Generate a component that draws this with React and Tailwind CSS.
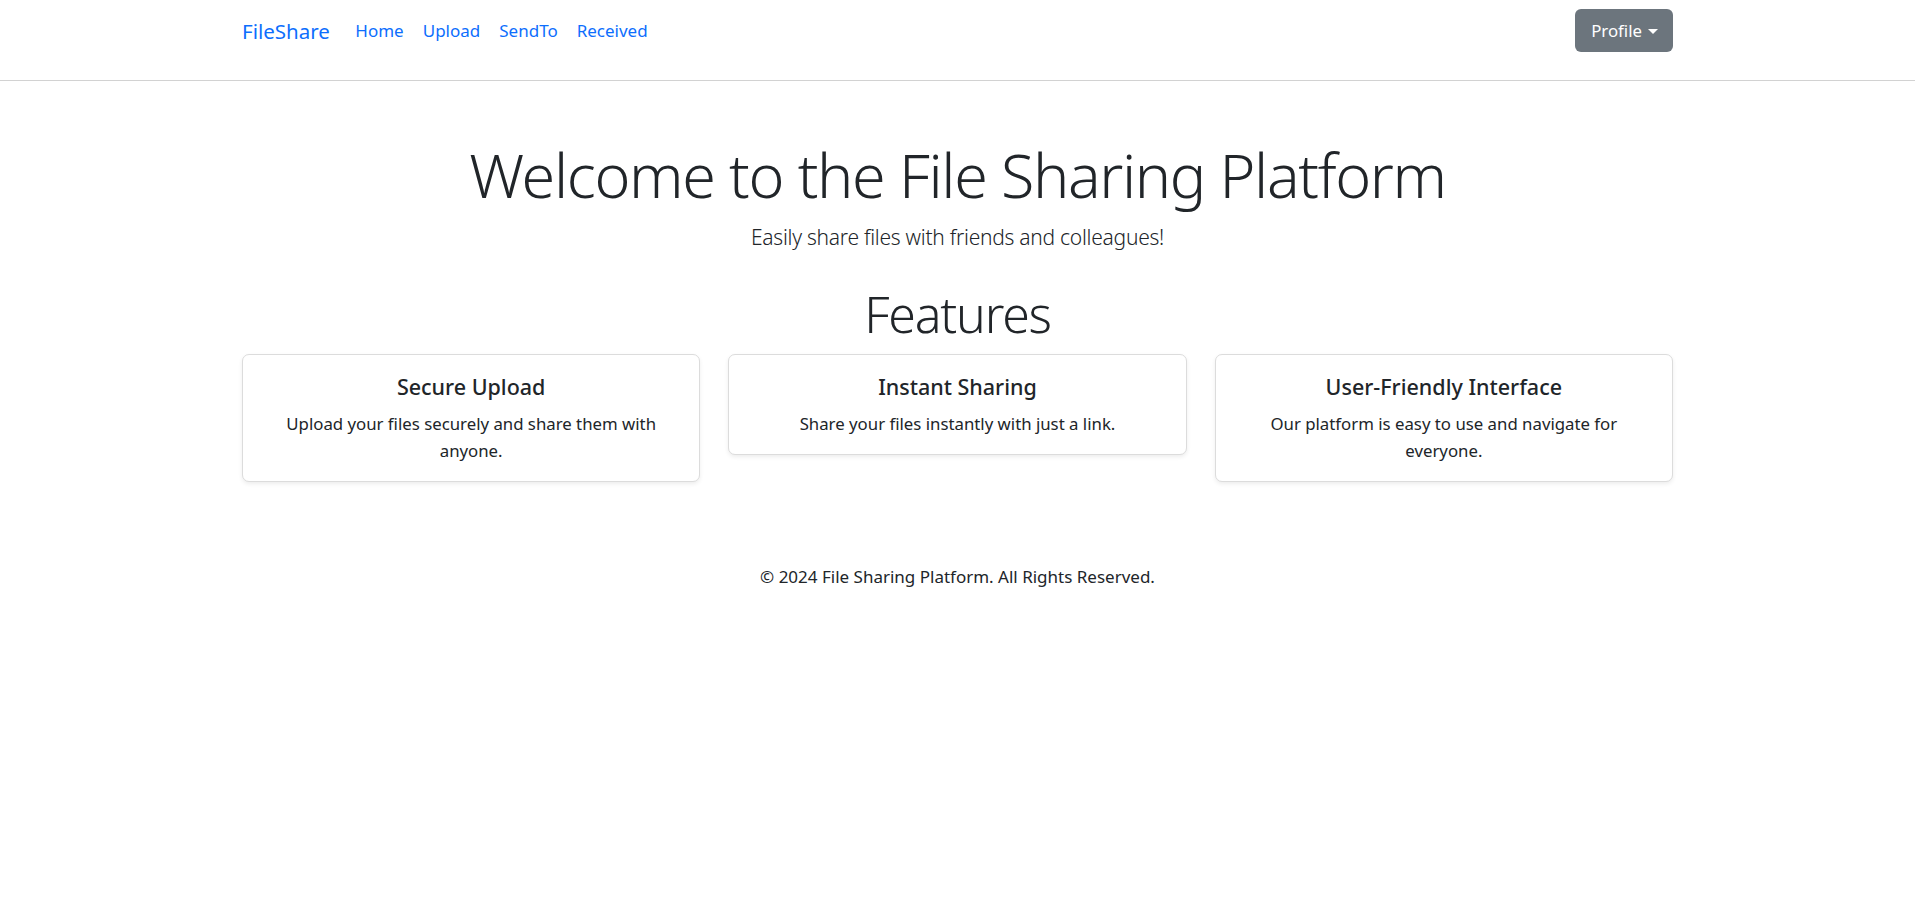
import React from "react";

const features = [
  {
    title: "Secure Upload",
    text: "Upload your files securely and share them with anyone.",
  },
  {
    title: "Instant Sharing",
    text: "Share your files instantly with just a link.",
  },
  {
    title: "User-Friendly Interface",
    text: "Our platform is easy to use and navigate for everyone.",
  },
];

const links = ["Home", "Upload", "SendTo", "Received"];

export default function App() {
  return (
    <div className="min-h-screen bg-white text-[#212529] font-['Noto_Sans',sans-serif]">
      <header className="h-[81px] border-b border-[#d2d2d2]">
        <nav className="mx-auto flex h-[61px] w-[1431px] items-center justify-between">
          <div className="flex items-center">
            <a href="#" className="mr-[16px] text-[20.5px] leading-[30px] text-[#0d6efd] no-underline">
              FileShare
            </a>
            <ul className="flex items-center">
              {links.map((l) => (
                <li key={l}>
                  <a href="#" className="block px-[9.5px] text-[17px] leading-[25px] text-[#0d6efd]">
                    {l}
                  </a>
                </li>
              ))}
            </ul>
          </div>
          <button
            type="button"
            className="flex h-[43px] items-center rounded-[6px] bg-[#6c757d] pl-[16px] pr-[15px] text-[16.8px] leading-[24px] text-white"
          >
            Profile
            <span className="ml-[6px] mt-[1px] h-0 w-0 border-x-[5px] border-t-[5px] border-x-transparent border-t-white" />
          </button>
        </nav>
      </header>

      <main className="mx-auto w-[1431px] pt-[57px]">
        <h1 className="text-center text-[61px] font-light leading-[74px] tracking-[-1.35px]">
          Welcome to the File Sharing Platform
        </h1>
        <p className="mt-[10px] text-center text-[21px] font-light leading-[30px] tracking-[-0.26px]">
          Easily share files with friends and colleagues!
        </p>

        <h2 className="mt-[32px] text-center text-[50px] font-light leading-[60px] tracking-[-1.2px]">
          Features
        </h2>

        <div className="mt-[10px] grid grid-cols-3 items-start gap-[28px]">
          {features.map((f) => (
            <div
              key={f.title}
              className="rounded-[7px] border border-[#dcdcdc] bg-white px-[19px] pt-[17px] pb-[17px] text-center shadow-[0_2px_4px_rgba(0,0,0,0.075)]"
            >
              <h5 className="mb-[9px] text-[21.5px] font-medium leading-[29px]">{f.title}</h5>
              <p className="text-[16.8px] leading-[27px]">{f.text}</p>
            </div>
          ))}
        </div>

        <footer className="mt-[82px] text-center text-[17px] leading-[26px]">
          © 2024 File Sharing Platform. All Rights Reserved.
        </footer>
      </main>
    </div>
  );
}
